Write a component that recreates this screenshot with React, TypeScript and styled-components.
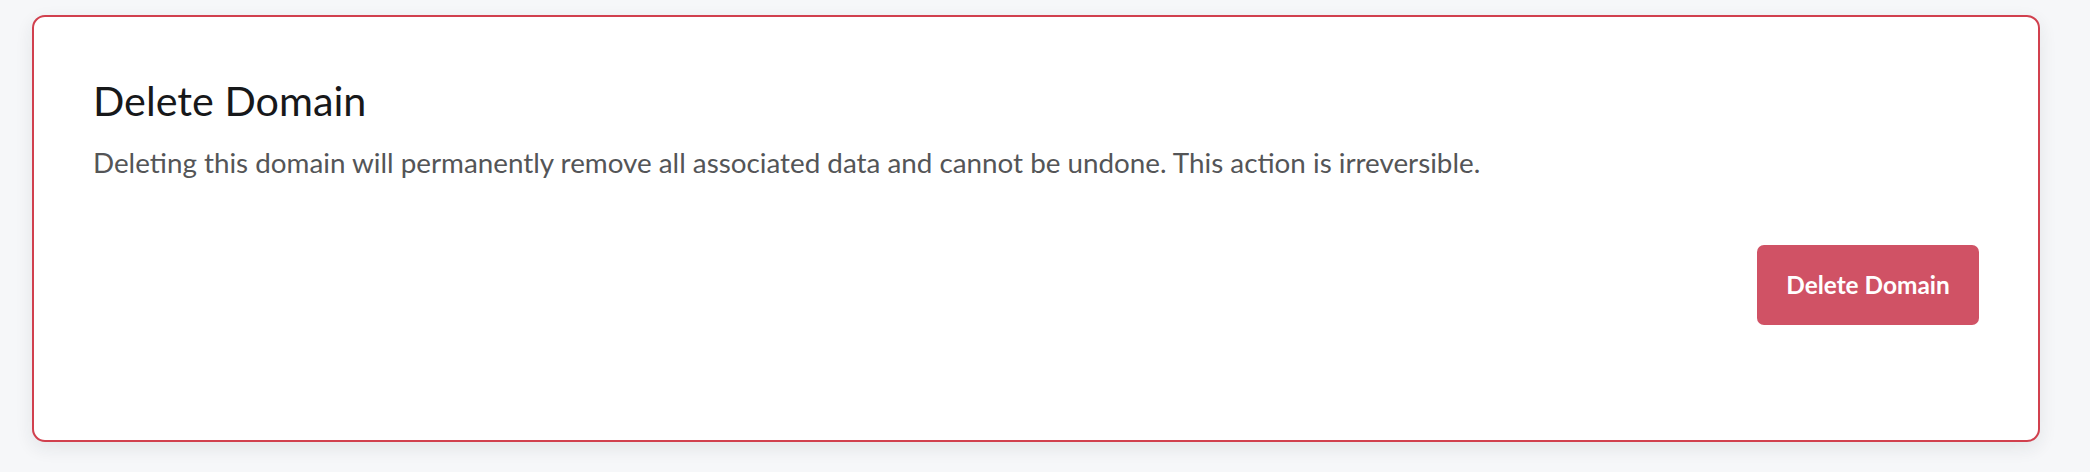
import styled, { createGlobalStyle } from 'styled-components';

const GlobalStyle = createGlobalStyle`
    html, body {
        margin: 0;
        padding: 0;
        background: #f6f7f9;
    }
    body {
        font-family: 'Lato', 'Liberation Sans', sans-serif;
    }
`;

const Page = styled.div`
    padding: 15px 50px 30px 32px;
`;

const DangerCard = styled.section`
    background: #ffffff;
    border: 2px solid #d1404e;
    border-radius: 13px;
    box-shadow: 0 6px 18px rgba(30, 40, 60, 0.09);
    padding: 59px 59px 115px 59px;
`;

const Title = styled.h2`
    margin: 0;
    font-size: 41.3px;
    line-height: 1.2;
    font-weight: 400;
    color: #17181a;
`;

const Description = styled.p`
    margin: 20px 0 0;
    font-size: 27.8px;
    line-height: 1.2;
    color: #545557;
`;

const Actions = styled.div`
    display: flex;
    justify-content: flex-end;
    margin-top: 66px;
`;

const DangerButton = styled.button`
    display: flex;
    align-items: center;
    justify-content: center;
    width: 222px;
    height: 80px;
    border: none;
    border-radius: 7px;
    background: #d05265;
    color: #ffffff;
    font-family: inherit;
    font-size: 24.4px;
    font-weight: 700;
    cursor: pointer;
`;

export default function App() {
    return (
        <>
            <GlobalStyle />
            <Page>
                <DangerCard>
                    <Title>Delete Domain</Title>
                    <Description>
                        Deleting this domain will permanently remove all associated data and cannot be undone. This action is irreversible.
                    </Description>
                    <Actions>
                        <DangerButton>Delete Domain</DangerButton>
                    </Actions>
                </DangerCard>
            </Page>
        </>
    );
}
